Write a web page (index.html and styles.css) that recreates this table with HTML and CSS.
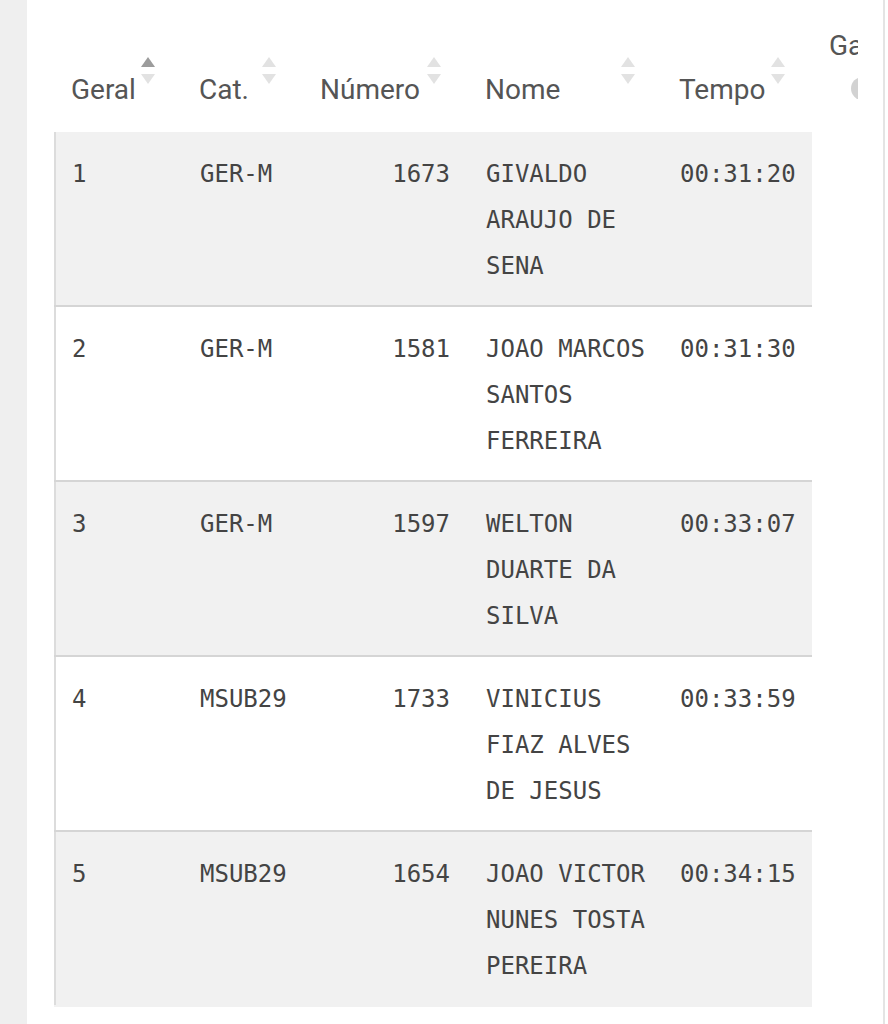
FILE: index.html
```html
<!DOCTYPE html>
<html lang="pt-BR">
<head>
<meta charset="utf-8">
<title>Resultados</title>
<link rel="stylesheet" href="styles.css">
</head>
<body>
<div class="page">
  <div class="content">
    <div class="scroll">
      <table class="results">
        <colgroup>
          <col class="c-geral"><col class="c-cat"><col class="c-num"><col class="c-nome"><col class="c-tempo"><col class="c-extra">
        </colgroup>
        <thead>
          <tr>
            <th><div class="th"><span class="label">Geral</span><span class="sort active-up"><i class="up"></i><i class="down"></i></span></div></th>
            <th><div class="th"><span class="label">Cat.</span><span class="sort"><i class="up"></i><i class="down"></i></span></div></th>
            <th><div class="th"><span class="label">Número</span><span class="sort"><i class="up"></i><i class="down"></i></span></div></th>
            <th><div class="th"><span class="label">Nome</span><span class="sort"><i class="up"></i><i class="down"></i></span></div></th>
            <th><div class="th"><span class="label">Tempo</span><span class="sort"><i class="up"></i><i class="down"></i></span></div></th>
            <th class="extra"><div class="extra-in"><span class="label">Ganho</span><span class="dot"></span></div></th>
          </tr>
        </thead>
        <tbody>
          <tr><td>1</td><td>GER-M</td><td class="num">1673</td><td>GIVALDO ARAUJO DE SENA</td><td class="time">00:31:20</td><td class="blank"></td></tr>
          <tr><td>2</td><td>GER-M</td><td class="num">1581</td><td>JOAO MARCOS SANTOS FERREIRA</td><td class="time">00:31:30</td><td class="blank"></td></tr>
          <tr><td>3</td><td>GER-M</td><td class="num">1597</td><td>WELTON DUARTE DA SILVA</td><td class="time">00:33:07</td><td class="blank"></td></tr>
          <tr><td>4</td><td>MSUB29</td><td class="num">1733</td><td>VINICIUS FIAZ ALVES DE JESUS</td><td class="time">00:33:59</td><td class="blank"></td></tr>
          <tr><td>5</td><td>MSUB29</td><td class="num">1654</td><td>JOAO VICTOR NUNES TOSTA PEREIRA</td><td class="time">00:34:15</td><td class="blank"></td></tr>
        </tbody>
      </table>
    </div>
  </div>
  <div class="rule"></div>
  <div class="tail"></div>
</div>
</body>
</html>
```

FILE: styles.css
```css
html, body {
  margin: 0;
  padding: 0;
}
body {
  background: #efefef;
  font-family: Roboto, "Liberation Sans", sans-serif;
  color: #444;
}
.page {
  margin-left: 27px;
  display: flex;
  min-height: 1024px;
  background: #fff;
}
.content {
  width: 856px;
  padding-left: 27px;
  box-sizing: border-box;
}
.rule {
  width: 2px;
  background: #e4e4e4;
}
.tail {
  flex: 1;
}
.scroll {
  width: 804px;
  overflow: hidden;
}
.results {
  table-layout: fixed;
  width: 898px;
  border-collapse: separate;
  border-spacing: 0;
}
.c-geral { width: 128px; }
.c-cat { width: 121px; }
.c-num { width: 165px; }
.c-nome { width: 194px; }
.c-tempo { width: 150px; }
.c-extra { width: 140px; }

.results thead tr {
  height: 132px;
}
.results th {
  padding: 0 27px 26px 17px;
  vertical-align: bottom;
  font-weight: 400;
  font-size: 28px;
  line-height: 32px;
  color: #555;
  text-align: left;
}
.th {
  display: flex;
  align-items: flex-end;
  justify-content: space-between;
}
.label {
  white-space: nowrap;
}
.sort {
  display: flex;
  flex-direction: column;
  gap: 7px;
  margin-bottom: 22px;
}
.sort i {
  display: block;
  width: 0;
  height: 0;
  border-left: 7px solid transparent;
  border-right: 7px solid transparent;
}
.sort .up {
  border-bottom: 10px solid #e2e2e2;
}
.sort .down {
  border-top: 10px solid #e2e2e2;
}
.sort.active-up .up {
  border-bottom-color: #9c9c9c;
}
.results th.extra {
  vertical-align: top;
  padding: 30px 0 0 17px;
}
.extra-in {
  display: flex;
  flex-direction: column;
  align-items: flex-start;
}
.dot {
  width: 23px;
  height: 23px;
  border-radius: 50%;
  background: #d2d2d2;
  margin: 15px 0 0 22px;
}

.results td {
  font-family: "DejaVu Sans Mono", "Liberation Mono", monospace;
  font-size: 24px;
  line-height: 46px;
  color: #444;
  padding: 19px 16px 16px 18px;
  vertical-align: top;
  border-bottom: 2px solid #d5d5d5;
  background: #fff;
}
.results tbody tr:nth-child(odd) td {
  background: #f1f1f1;
}
.results tbody tr:last-child td {
  border-bottom-color: transparent;
}
.results td:first-child {
  box-shadow: inset 2px 0 0 #dcdcdc;
}
.results td.num {
  text-align: right;
  padding-right: 18px;
}
.results td.time {
  white-space: nowrap;
}
.results tbody tr td.blank {
  background: #fff;
  border-bottom: none;
}
```
